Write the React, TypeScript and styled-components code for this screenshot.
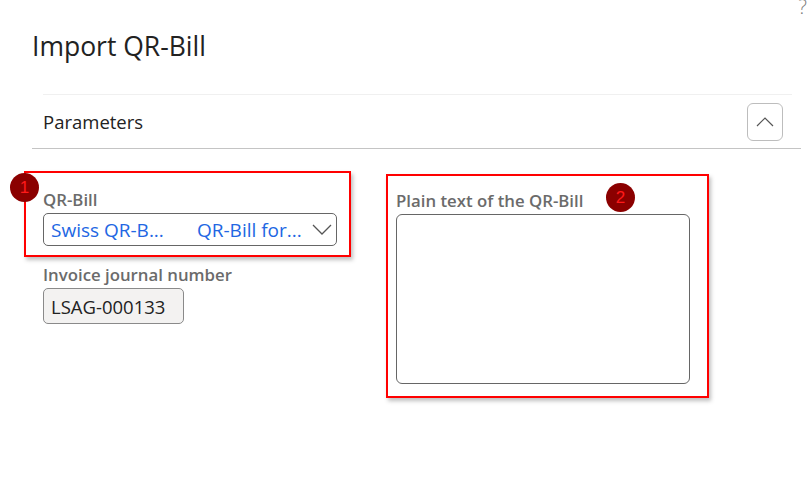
import React from "react";
import styled, { createGlobalStyle } from "styled-components";

const GlobalStyle = createGlobalStyle`
  html, body {
    margin: 0;
    padding: 0;
    background: #ffffff;
    font-family: "Open Sans", "Noto Sans", sans-serif;
  }
`;

const Page = styled.div`
  position: relative;
  width: 809px;
  height: 482px;
  overflow: hidden;
  background: #ffffff;
  padding: 27px 8px 0 32px;
  box-sizing: border-box;
`;

const Help = styled.span`
  position: absolute;
  top: -7px;
  right: 2px;
  font-size: 20px;
  color: #7a7a7a;
  font-weight: 300;
`;

const Title = styled.h1`
  margin: 0;
  font-size: 26.5px;
  font-weight: 400;
  color: #222;
  line-height: 38px;
`;

const Section = styled.section`
  margin-top: 29px;
`;

const SectionHead = styled.div`
  display: flex;
  align-items: center;
  justify-content: space-between;
  height: 53px;
  margin-left: 11px;
  margin-right: 9px;
  border-top: 1px solid #f0f0f0;
  padding-right: 9px;
`;

const SectionTitle = styled.h2`
  margin: 0;
  font-size: 18.5px;
  font-weight: 400;
  color: #222;
`;

const CollapseButton = styled.button`
  width: 36px;
  height: 38px;
  border: 1px solid #bdbdbd;
  border-radius: 6px;
  background: #fff;
  display: flex;
  align-items: center;
  justify-content: center;
  padding: 0;
`;

const Divider = styled.div`
  height: 1px;
  background: #c4c4c4;
`;

const Body = styled.div`
  display: flex;
  align-items: flex-start;
  padding-top: 22px;
  margin-left: -8px;
`;

const LeftColumn = styled.div`
  display: flex;
  flex-direction: column;
  width: 327px;
`;

const Highlight = styled.div<{ $w: number; $h: number }>`
  position: relative;
  width: ${(p) => p.$w}px;
  height: ${(p) => p.$h}px;
  box-sizing: border-box;
  border: 2px solid #ff0000;
  box-shadow: 2px 3px 4px rgba(0, 0, 0, 0.25);
`;

const Badge = styled.span<{ $x: number; $y: number }>`
  position: absolute;
  left: ${(p) => p.$x}px;
  top: ${(p) => p.$y}px;
  width: 29px;
  height: 29px;
  border-radius: 50%;
  background: #8b0000;
  color: #ff1a1a;
  font-size: 17px;
  line-height: 29px;
  text-align: center;
  font-family: "Liberation Sans", sans-serif;
`;

const Field = styled.div`
  display: flex;
  flex-direction: column;
  padding: 17px 0 0 17px;
`;

const Label = styled.label`
  font-size: 16.8px;
  font-weight: 600;
  color: #6b6b6b;
  line-height: 20px;
  margin-bottom: 3px;
  white-space: nowrap;
`;

const Select = styled.div`
  width: 294px;
  height: 33px;
  box-sizing: border-box;
  border: 1px solid #666;
  border-radius: 5px;
  display: flex;
  align-items: center;
  padding: 0 4px 0 7px;
  color: #2266e3;
  font-size: 19px;
`;

const SelectPart = styled.span<{ $w: number }>`
  width: ${(p) => p.$w}px;
  white-space: nowrap;
`;

const Chevron = styled.svg`
  margin-left: auto;
`;

const ReadOnlyInput = styled.div`
  width: 141px;
  height: 36px;
  box-sizing: border-box;
  background: #f3f2f1;
  border: 1px solid #8a8a8a;
  border-radius: 5px;
  display: flex;
  align-items: center;
  padding-left: 7px;
  color: #222;
  font-size: 18.5px;
  white-space: nowrap;
`;

const PlainField = styled(Field)`
  padding: 15px 0 0 8px;
`;

const TextArea = styled.textarea`
  width: 294px;
  height: 170px;
  box-sizing: border-box;
  border: 1px solid #666;
  border-radius: 6px;
  resize: none;
  margin-top: 0;
`;

const SubField = styled.div`
  display: flex;
  flex-direction: column;
  padding: 8px 0 0 19px;
`;

export default function App(): React.ReactElement {
  return (
    <>
      <GlobalStyle />
      <Page>
        <Help>?</Help>
        <Title>Import QR-Bill</Title>
        <Section>
          <SectionHead>
            <SectionTitle>Parameters</SectionTitle>
            <CollapseButton aria-label="Collapse">
              <svg width="18" height="10" viewBox="0 0 18 10">
                <path d="M1 9 L9 1 L17 9" fill="none" stroke="#555" strokeWidth="1.2" />
              </svg>
            </CollapseButton>
          </SectionHead>
          <Divider />
          <Body>
            <LeftColumn>
              <Highlight $w={327} $h={86}>
                <Badge $x={-16} $y={0}>1</Badge>
                <Field>
                  <Label>QR-Bill</Label>
                  <Select>
                    <SelectPart $w={146}>Swiss QR-B...</SelectPart>
                    <SelectPart $w={112}>QR-Bill for...</SelectPart>
                    <Chevron width="20" height="12" viewBox="0 0 20 12">
                      <path d="M1 1 L10 10 L19 1" fill="none" stroke="#555" strokeWidth="1.3" />
                    </Chevron>
                  </Select>
                </Field>
              </Highlight>
              <SubField>
                <Label>Invoice journal number</Label>
                <ReadOnlyInput>LSAG-000133</ReadOnlyInput>
              </SubField>
            </LeftColumn>
            <Highlight $w={323} $h={224} style={{ marginLeft: 35, marginTop: 3 }}>
              <Badge $x={218} $y={7}>2</Badge>
              <PlainField>
                <Label>Plain text of the QR-Bill</Label>
                <TextArea />
              </PlainField>
            </Highlight>
          </Body>
        </Section>
      </Page>
    </>
  );
}
